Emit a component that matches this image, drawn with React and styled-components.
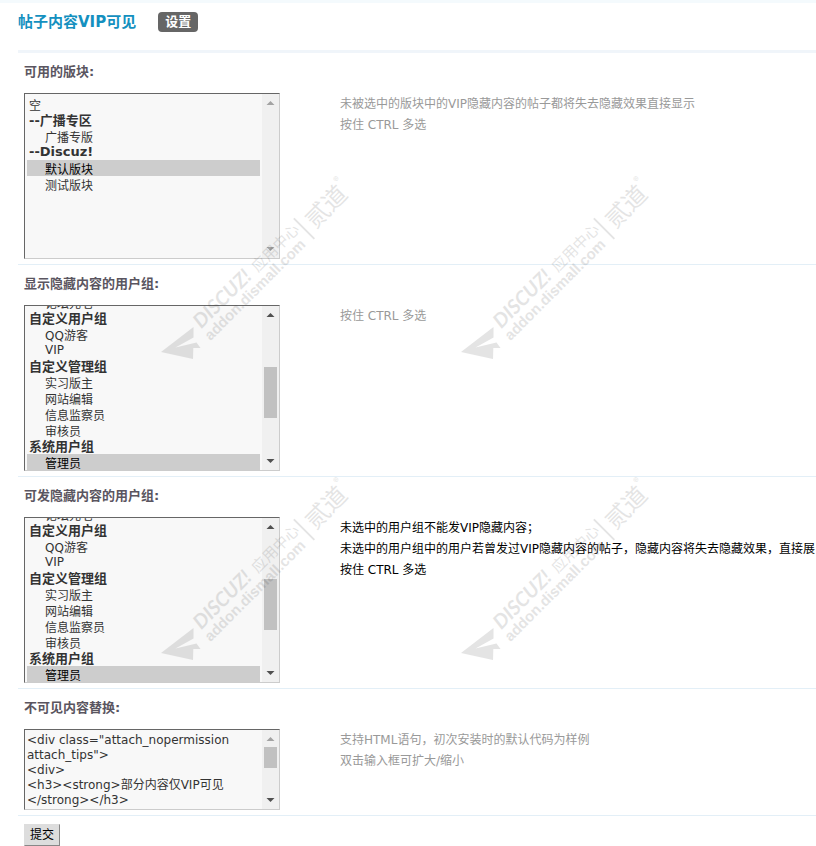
import React from "react";
import styled, { createGlobalStyle } from "styled-components";

const COLORS = {
  title: "#1490bf",
  badge: "#666",
  label: "#5a5560",
  muted: "#999",
  line: "#e3eff7",
  field: "#f8f8f8",
  track: "#f0f0f0",
  thumb: "#c1c1c1",
};

const FORUMS = [
  { label: "空" },
  { group: "--广播专区", items: ["广播专版"] },
  { group: "--Discuz!", items: ["默认版块", "测试版块"] },
];

const USER_GROUPS = [
  { label: "空" },
  {
    group: "会员用户组",
    items: [
      "限制会员",
      "新手上路",
      "注册会员",
      "中级会员",
      "高级会员",
      "金牌会员",
      "论坛元老",
    ],
  },
  { group: "自定义用户组", items: ["QQ游客", "VIP"] },
  {
    group: "自定义管理组",
    items: ["实习版主", "网站编辑", "信息监察员", "审核员"],
  },
  {
    group: "系统用户组",
    items: [
      "管理员",
      "超级版主",
      "版主",
      "禁止发言",
      "禁止访问",
      "禁止 IP",
      "游客",
      "等待验证会员",
    ],
  },
];

const REPLACEMENT = `<div class="attach_nopermission attach_tips">
<div>
<h3><strong>部分内容仅VIP可见</strong></h3>
<p>您需要升级为VIP才可以查看</p>
</div>
<span class="atips_close" onclick="this.parentNode.style.display='none'">x</span>
</div>`;

function Setting({ id, label, help, strong, children }) {
  return (
    <Row>
      <Label htmlFor={id}>{label}</Label>
      <Columns>
        {children}
        <Help id={`${id}-help`} $strong={strong}>
          {help.map((line) => (
            <p key={line}>{line}</p>
          ))}
        </Help>
      </Columns>
    </Row>
  );
}

// Keeps the drawn scrollbar in step with the control that scrolls.
function useScroll(initialTop) {
  const ref = React.useRef(null);
  const [state, setState] = React.useState({ top: 0, size: 100 });

  const measure = React.useCallback(() => {
    const { scrollTop, scrollHeight, clientHeight } = ref.current;
    setState({
      top: (scrollTop / scrollHeight) * 100,
      size: Math.min(100, (clientHeight / scrollHeight) * 100),
    });
  }, []);

  React.useLayoutEffect(() => {
    ref.current.scrollTop = initialTop;
    measure();
  }, [initialTop, measure]);

  return { ref, measure, state };
}

function Scrollbar({ top, size }) {
  const scrolls = size < 100;
  return (
    <Bar aria-hidden="true">
      <Arrow $faded={!scrolls || top === 0} viewBox="0 0 17 17">
        <path d="M4.5 11 L8.5 7 L12.5 11 Z" />
      </Arrow>
      <Track>
        {scrolls && <Thumb style={{ top: `${top}%`, height: `${size}%` }} />}
      </Track>
      <Arrow $faded={!scrolls} viewBox="0 0 17 17">
        <path d="M4.5 6 L8.5 10 L12.5 6 Z" />
      </Arrow>
    </Bar>
  );
}

function MultiSelect({ id, name, options, selected, scrollTop = 0 }) {
  const { ref, measure, state } = useScroll(scrollTop);

  return (
    <Field>
      <List
        ref={ref}
        id={id}
        name={name}
        multiple
        defaultValue={selected}
        onScroll={measure}
        aria-describedby={`${id}-help`}
      >
        {options.map((entry) =>
          entry.group ? (
            <optgroup key={entry.group} label={entry.group}>
              {entry.items.map((item) => (
                <option key={item} value={item}>
                  {item}
                </option>
              ))}
            </optgroup>
          ) : (
            <option key={entry.label} value="">
              {entry.label}
            </option>
          )
        )}
      </List>
      <Scrollbar {...state} />
    </Field>
  );
}

function CodeInput({ id, name, value }) {
  const { ref, measure, state } = useScroll(0);

  return (
    <Field>
      <TextArea
        ref={ref}
        id={id}
        name={name}
        defaultValue={value}
        spellCheck={false}
        onScroll={measure}
        aria-describedby={`${id}-help`}
      />
      <Scrollbar {...state} />
    </Field>
  );
}

function Mark({ x, y }) {
  return (
    <g transform={`translate(${x} ${y})`}>
      <path d="M11 187 L43.5 162 V172.5 L25.5 182.5 L46.5 177.5 L50.5 183 H43.3 L43 194 Z" />
      <g transform="translate(52 165) rotate(-45)">
        <MarkText y="-1" $font="Lato" $size={20} $bold $italic>
          DISCUZ!
        </MarkText>
        <MarkText x="80" y="-1" $size={15}>
          应用中心
        </MarkText>
        <path d="M143 -14 h1.8 v29 h-1.8 z" />
        <MarkText x="151" y="9" $size={24}>
          贰道
        </MarkText>
        <MarkText x="199" y="-6" $size={11}>
          ®
        </MarkText>
        <MarkText x="-2" y="14" $font="Liberation Sans" $size={15} $bold>
          addon.dismall.com
        </MarkText>
      </g>
    </g>
  );
}

function Watermark() {
  return (
    <WatermarkLayer aria-hidden="true">
      <Mark x={150} y={165} />
      <Mark x={450} y={165} />
      <Mark x={150} y={466} />
      <Mark x={450} y={466} />
    </WatermarkLayer>
  );
}

function App() {
  return (
    <Page>
      <GlobalStyle />
      <Header>
        <Title>帖子内容VIP可见</Title>
        <Badge href="#settings">设置</Badge>
      </Header>
      <form id="settings" onSubmit={(event) => event.preventDefault()}>
        <Setting
          id="forums"
          label="可用的版块:"
          help={[
            "未被选中的版块中的VIP隐藏内容的帖子都将失去隐藏效果直接显示",
            "按住 CTRL 多选",
          ]}
        >
          <MultiSelect
            id="forums"
            name="forums"
            options={FORUMS}
            selected={["默认版块"]}
          />
        </Setting>
        <Setting
          id="view-groups"
          label="显示隐藏内容的用户组:"
          help={["按住 CTRL 多选"]}
        >
          <MultiSelect
            id="view-groups"
            name="viewGroups"
            options={USER_GROUPS}
            selected={["管理员"]}
            scrollTop={142}
          />
        </Setting>
        <Setting
          id="post-groups"
          label="可发隐藏内容的用户组:"
          strong
          help={[
            "未选中的用户组不能发VIP隐藏内容；",
            "未选中的用户组中的用户若曾发过VIP隐藏内容的帖子，隐藏内容将失去隐藏效果，直接展",
            "按住 CTRL 多选",
          ]}
        >
          <MultiSelect
            id="post-groups"
            name="postGroups"
            options={USER_GROUPS}
            selected={["管理员"]}
            scrollTop={142}
          />
        </Setting>
        <Setting
          id="replacement"
          label="不可见内容替换:"
          help={[
            "支持HTML语句，初次安装时的默认代码为样例",
            "双击输入框可扩大/缩小",
          ]}
        >
          <CodeInput id="replacement" name="replacement" value={REPLACEMENT} />
        </Setting>
        <Submit type="submit">提交</Submit>
      </form>
      <Watermark />
    </Page>
  );
}

const GlobalStyle = createGlobalStyle`
  *, *::before, *::after {
    box-sizing: border-box;
  }

  body {
    margin: 0;
    background: #fff;
    color: #333;
    font: 12px/16px "DejaVu Sans", "Noto Sans CJK SC", sans-serif;
  }

  p, h1 {
    margin: 0;
  }
`;

const Page = styled.main`
  position: relative;
  overflow: hidden;
  padding-left: 18px;
  border-top: 3px solid #f4fafd;
`;

const Header = styled.header`
  display: flex;
  align-items: center;
  gap: 22px;
  height: 50px;
  padding-bottom: 10px;
  border-bottom: 3px solid #f0f5fa;
`;

const Title = styled.h1`
  color: ${COLORS.title};
  font-size: 15px;
  line-height: 20px;
  font-weight: 700;
`;

const Badge = styled.a`
  padding: 0 7px;
  border-radius: 4px;
  background: ${COLORS.badge};
  color: #fff;
  font-size: 13px;
  line-height: 20px;
  font-weight: 700;
  text-decoration: none;
`;

const Row = styled.div`
  padding: 0 0 5px 6px;
  border-bottom: 1px solid ${COLORS.line};
`;

const Label = styled.label`
  display: block;
  padding: 1px 0 3px;
  color: ${COLORS.label};
  font-size: 13px;
  line-height: 36px;
  font-weight: 700;
`;

const Columns = styled.div`
  display: grid;
  grid-template-columns: 256px 1fr;
  column-gap: 60px;
`;

const Help = styled.div`
  padding-top: 1px;
  color: ${(props) => (props.$strong ? "#000" : COLORS.muted)};
  line-height: 21px;
  white-space: nowrap;
`;

const Field = styled.div`
  display: grid;
  grid-template-columns: 1fr 17px;
  align-items: start;
  border: 1px solid;
  border-color: #666 #ccc #ccc #666;
  background: ${COLORS.field};
`;

const fieldStyles = `
  display: block;
  width: 100%;
  margin: 0;
  border: none;
  border-radius: 0;
  outline: none;
  background: transparent;
  color: #333;
  font: inherit;
  overflow-y: scroll;
  scrollbar-width: none;
`;

const List = styled.select`
  ${fieldStyles}
  height: 164px;
  padding: 2px;

  optgroup {
    display: grid;
    grid-template-rows: 16px;
    grid-auto-rows: 16px;
    align-items: center;
    font-size: 13px;
    font-weight: 700;
  }

  option {
    display: flex;
    align-items: center;
    height: 16px;
    min-height: 16px;
    padding: 0 2px;
    font-size: 12px;
    font-weight: 400;
  }

  optgroup option {
    padding-left: 18px;
  }

  option:checked {
    background: #cdcdcd;
    color: #000;
  }
`;

const TextArea = styled.textarea`
  ${fieldStyles}
  height: 78px;
  margin-bottom: 1px;
  padding: 3px 2px 0;
  line-height: 15px;
  resize: none;
`;

const Bar = styled.div`
  display: flex;
  flex-direction: column;
  align-self: stretch;
  background: ${COLORS.track};
`;

const Arrow = styled.svg`
  flex: none;
  width: 17px;
  height: 17px;
  fill: ${(props) => (props.$faded ? "#a3a3a3" : "#505050")};
`;

const Track = styled.div`
  position: relative;
  flex: 1;
`;

const Thumb = styled.div`
  position: absolute;
  left: 2px;
  right: 2px;
  min-height: 20px;
  background: ${COLORS.thumb};
`;

const Submit = styled.button`
  display: block;
  height: 22px;
  margin: 8px 0 0 6px;
  padding: 0 5px;
  border: 1px solid;
  border-color: #ddd #888 #888 #ddd;
  border-radius: 0;
  background: #ddd;
  color: #000;
  font: inherit;
`;

const WatermarkLayer = styled.svg`
  position: absolute;
  top: -3px;
  left: 0;
  width: 100%;
  height: 100%;
  fill: #000;
  opacity: 0.1;
  pointer-events: none;
`;

const MarkText = styled.text`
  font-family: ${(props) => (props.$font ? `"${props.$font}", ` : "")}
    "Noto Sans CJK SC", sans-serif;
  font-size: ${(props) => props.$size}px;
  font-weight: ${(props) => (props.$bold ? 700 : 400)};
  font-style: ${(props) => (props.$italic ? "italic" : "normal")};
`;

export default App;
